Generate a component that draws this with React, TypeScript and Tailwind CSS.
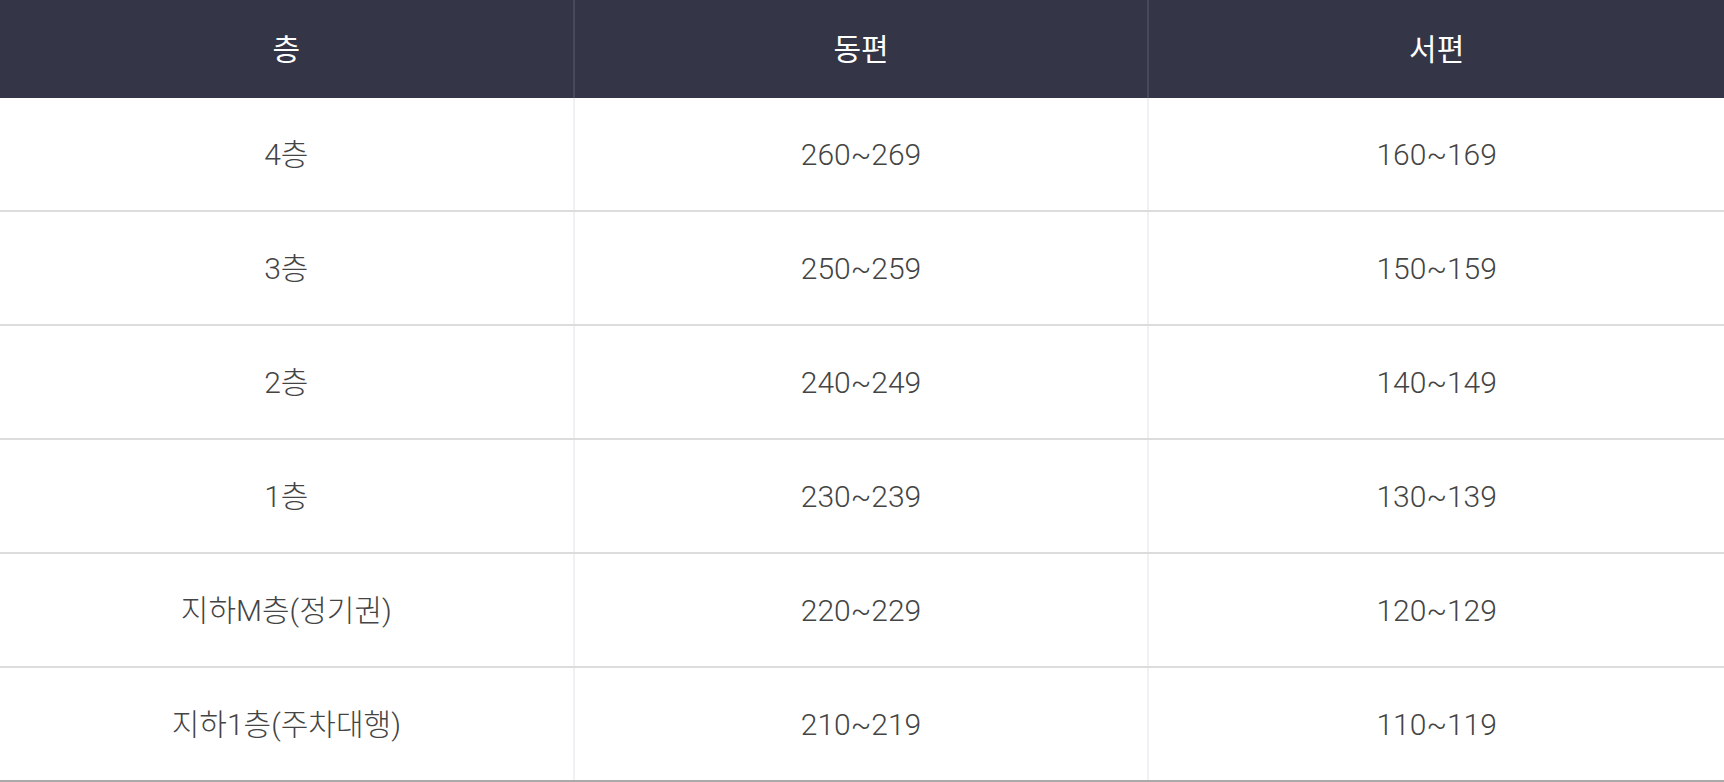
import React from "react";

const rows = [
	{ floor: "4층", east: "260~269", west: "160~169" },
	{ floor: "3층", east: "250~259", west: "150~159" },
	{ floor: "2층", east: "240~249", west: "140~149" },
	{ floor: "1층", east: "230~239", west: "130~139" },
	{ floor: "지하M층(정기권)", east: "220~229", west: "120~129" },
	{ floor: "지하1층(주차대행)", east: "210~219", west: "110~119" },
];

export default function App() {
	return (
		<div
			className="w-full bg-white"
			style={{ fontFamily: 'Roboto, "Noto Sans CJK KR", sans-serif' }}
		>
			{/* Header */}
			<div className="grid grid-cols-3 h-[98px] bg-[#343647] text-white text-[30px] font-normal">
				<div className="flex items-center justify-center border-r-2 border-[#474a5b]">층</div>
				<div className="flex items-center justify-center border-r-2 border-[#474a5b]">동편</div>
				<div className="flex items-center justify-center">서편</div>
			</div>

			{/* Body */}
			{rows.map((row, i) => (
				<div
					key={row.floor}
					className={`grid grid-cols-3 h-[114px] border-b-2 text-[30px] font-light text-[#444444] ${
						i === rows.length - 1 ? "border-[#a9a9a9]" : "border-[#dcdcdc]"
					}`}
				>
					<div className="flex items-center justify-center border-r-2 border-[#f0f0f5]">{row.floor}</div>
					<div className="flex items-center justify-center border-r-2 border-[#f0f0f5]">{row.east}</div>
					<div className="flex items-center justify-center">{row.west}</div>
				</div>
			))}
		</div>
	);
}
